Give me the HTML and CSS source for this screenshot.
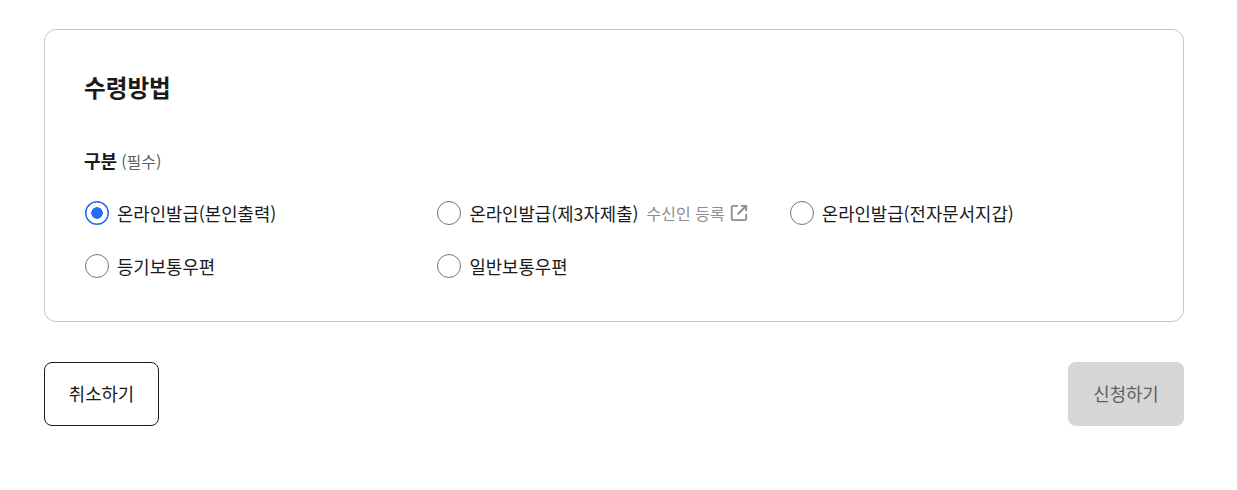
FILE: index.html
```html
<!DOCTYPE html>
<html lang="ko">

<head>
    <meta charset="UTF-8">
    <meta name="viewport" content="width=device-width, initial-scale=1.0">
    <title>수령방법</title>
    <link rel="stylesheet" href="styles.css">
</head>

<body>
    <div class="page">
        <section class="card">
            <h2 class="card-title">수령방법</h2>
            <p class="field-label">구분 <span class="required">(필수)</span></p>
            <div class="radio-grid">
                <label class="radio-item">
                    <input type="radio" name="method" checked>
                    <span>온라인발급(본인출력)</span>
                </label>
                <div class="radio-item">
                    <label class="radio-item">
                        <input type="radio" name="method">
                        <span>온라인발급(제3자제출)</span>
                    </label>
                    <a class="sub-link" href="#">수신인 등록
                        <svg width="20" height="20" viewBox="0 0 20 20" fill="none" stroke="#8c8c8c" stroke-width="1.8">
                            <path d="M9 2.8H4.2a1.5 1.5 0 0 0-1.5 1.5v11.4a1.5 1.5 0 0 0 1.5 1.5h11.5a1.5 1.5 0 0 0 1.5-1.5V11" />
                            <path d="M12 2.8h5.2V8M17 3L8.5 11.5" />
                        </svg>
                    </a>
                </div>
                <label class="radio-item">
                    <input type="radio" name="method">
                    <span>온라인발급(전자문서지갑)</span>
                </label>
                <label class="radio-item">
                    <input type="radio" name="method">
                    <span>등기보통우편</span>
                </label>
                <label class="radio-item">
                    <input type="radio" name="method">
                    <span>일반보통우편</span>
                </label>
            </div>
        </section>

        <div class="button-row">
            <button type="button" class="btn btn-cancel">취소하기</button>
            <button type="button" class="btn btn-submit" disabled>신청하기</button>
        </div>
    </div>
</body>

</html>
```

FILE: styles.css
```css
body {
    font-family: "Noto Sans CJK KR", "Noto Sans", sans-serif;
    background-color: #fff;
    color: #1a1a1a;
    margin: 0;
    padding: 0;
}

.page {
    width: 1140px;
    margin-left: 44px;
    padding-top: 29px;
}

.card {
    box-sizing: border-box;
    height: 293px;
    padding: 39px 40px 0;
    border: 1px solid #c6c6c6;
    border-radius: 12px;
}

.card-title {
    margin: 0 0 0 -1px;
    font-size: 23.6px;
    line-height: 36px;
    font-weight: 700;
}

.field-label {
    margin: 40px 0 0 -1px;
    font-size: 18px;
    line-height: 30px;
    font-weight: 700;
}

.required {
    margin-left: -1px;
    font-size: 16px;
    font-weight: 400;
    color: #5f5f5f;
}

.radio-grid {
    display: grid;
    grid-template-columns: repeat(3, 352.4px);
    grid-auto-rows: 53px;
    margin-top: 10px;
}

.radio-item {
    display: flex;
    align-items: center;
    font-size: 17.8px;
    height: 53px;
}

.radio-item input {
    appearance: none;
    box-sizing: border-box;
    width: 24px;
    height: 24px;
    margin: 0 8px 0 0;
    border: 1px solid #757575;
    border-radius: 50%;
    background-color: #fff;
}

.radio-item input:checked {
    border: none;
    background: radial-gradient(circle, #256ef4 0, #256ef4 5.5px, #fff 6px, #fff 10.2px, #256ef4 10.7px);
}

.sub-link {
    display: flex;
    align-items: center;
    gap: 4px;
    margin-left: 8px;
    font-size: 16px;
    color: #8c8c8c;
    text-decoration: none;
}

.button-row {
    display: flex;
    justify-content: space-between;
    margin-top: 40px;
}

.btn {
    box-sizing: border-box;
    width: 115px;
    height: 64px;
    padding: 0 0 2px;
    font-family: inherit;
    font-size: 17.8px;
    border-radius: 8px;
}

.btn-cancel {
    background-color: #fff;
    color: #1a1a1a;
    border: 1px solid #1a1a1a;
}

.btn-submit {
    width: 116px;
    background-color: #d6d6d6;
    color: #5f5f5f;
    border: none;
}
```
